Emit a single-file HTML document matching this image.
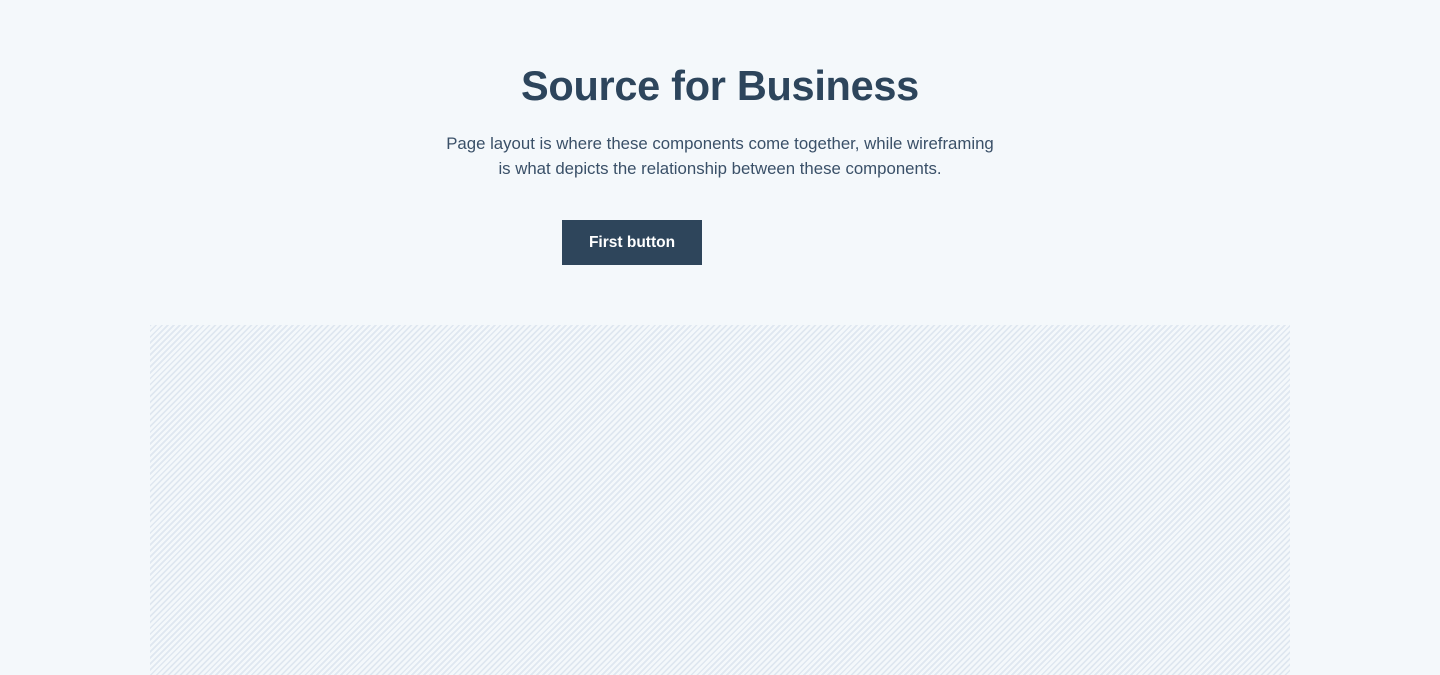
<!DOCTYPE html>
<html><head><style>
html,body{margin:0;padding:0;width:1440px;height:675px;overflow:hidden;background:#f4f8fb;font-family:"Liberation Sans",sans-serif;color:#2d455c}
h1{position:absolute;top:58px;left:0;width:1440px;text-align:center;margin:0;font-size:41.5px;line-height:56px;font-weight:bold;letter-spacing:-0.3px}
p{position:absolute;top:131px;left:0;width:1440px;text-align:center;margin:0;font-size:16.8px;line-height:25px;color:#3a5068}
.btn{position:absolute;left:562px;top:220px;width:140px;height:45px;background:#2e455b;color:#fff;font-weight:bold;font-size:15.5px;line-height:45px;text-align:center}
.hatch{position:absolute;left:150px;top:325px;width:1140px;height:350px;background:repeating-linear-gradient(-45deg,#f4f8fb 0,#f4f8fb 2.5px,#dfe7f0 2.5px,#dfe7f0 4.2px)}
</style></head><body>
<h1>Source for Business</h1>
<p>Page layout is where these components come together, while wireframing<br>is what depicts the relationship between these components.</p>
<div class="btn">First button</div>
<div class="hatch"></div>
</body></html>
